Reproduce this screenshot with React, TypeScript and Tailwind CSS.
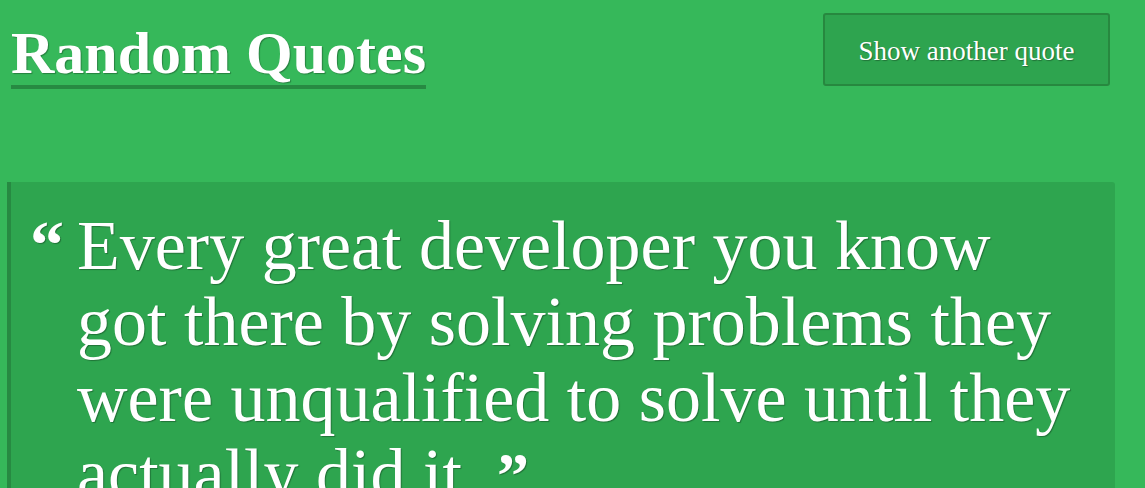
import React from "react";

export default function App() {
  return (
    <div
      className="min-h-[488px] w-full bg-[#36b85a] text-white overflow-hidden"
      style={{ fontFamily: '"Liberation Serif", "Times New Roman", serif' }}
    >
      <header className="flex items-start justify-between pl-[11px] pr-[35px] pt-[13px]">
        <h1 className="mt-[10px] border-b-4 border-[#278a42] pb-[2px] text-[60px] font-bold leading-none [text-shadow:1px_1px_1px_rgba(0,0,0,0.3)]">
          Random Quotes
        </h1>
        <button className="flex h-[73px] w-[287px] items-center justify-center rounded-[3px] border-2 border-[#27883f] bg-[#2ea44f] pt-[3px] text-[27px] leading-none [text-shadow:1px_1px_1px_rgba(0,0,0,0.3)]">
          Show another quote
        </button>
      </header>

      <blockquote className="relative ml-[7px] mr-[30px] mt-[93px] rounded-r-[3px] border-l-4 border-[#278a42] bg-[#2ea54f] pb-[20px] pl-[66px] pr-[27px] pt-[26px]">
        <span className="absolute left-[19px] top-[29px] text-[68px] font-bold leading-none [text-shadow:1px_1px_1px_rgba(0,0,0,0.3)]">
          “
        </span>
        <p className="text-[70px] leading-[76px] [text-shadow:1px_1px_1px_rgba(0,0,0,0.3)]">
          Every great developer you know got there by solving problems they
          were unqualified to solve until they actually did it.{" "}
          <span className="text-[64px] font-bold leading-none">”</span>
        </p>
      </blockquote>
    </div>
  );
}
